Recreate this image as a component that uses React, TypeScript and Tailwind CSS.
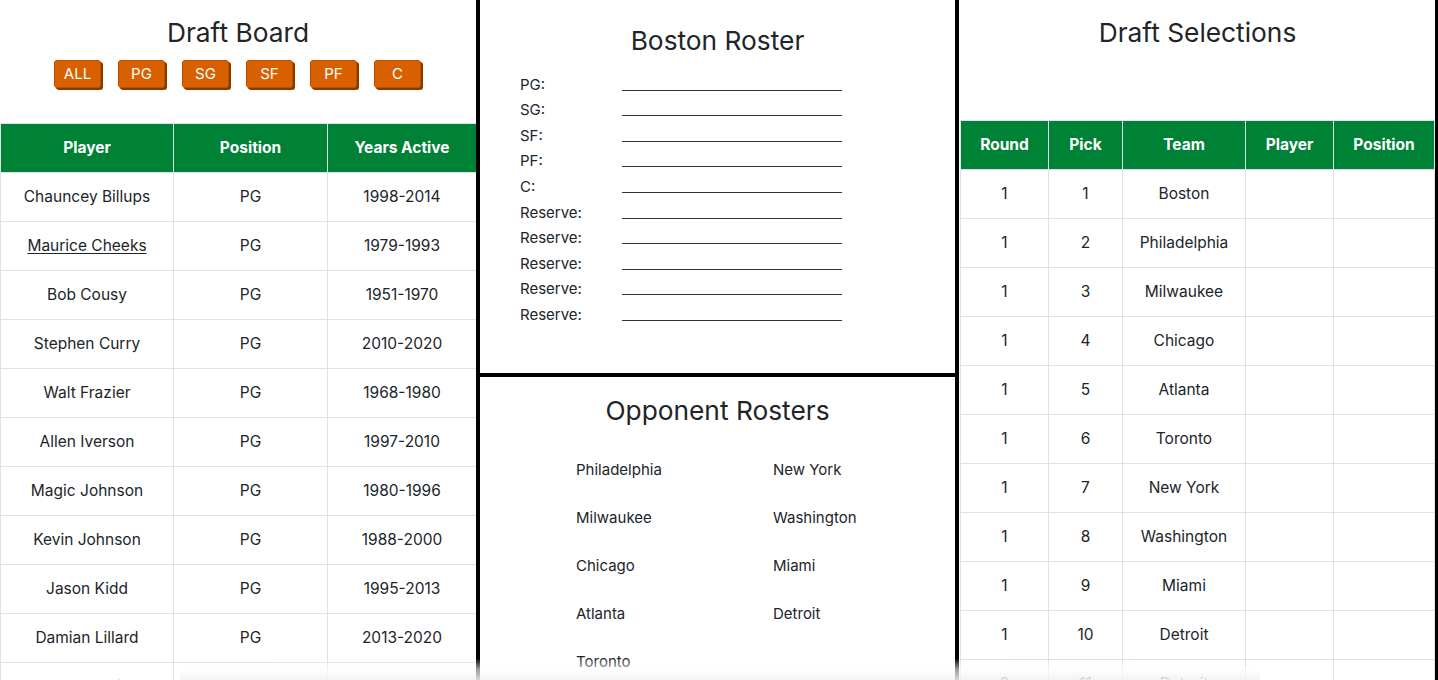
import React from 'react';

const players = [
  ['Chauncey Billups', 'PG', '1998-2014'],
  ['Maurice Cheeks', 'PG', '1979-1993'],
  ['Bob Cousy', 'PG', '1951-1970'],
  ['Stephen Curry', 'PG', '2010-2020'],
  ['Walt Frazier', 'PG', '1968-1980'],
  ['Allen Iverson', 'PG', '1997-2010'],
  ['Magic Johnson', 'PG', '1980-1996'],
  ['Kevin Johnson', 'PG', '1988-2000'],
  ['Jason Kidd', 'PG', '1995-2013'],
  ['Damian Lillard', 'PG', '2013-2020'],
  ['Pete Maravich', 'PG', '1970-1980'],
];

const order = ['Boston', 'Philadelphia', 'Milwaukee', 'Chicago', 'Atlanta', 'Toronto', 'New York', 'Washington', 'Miami', 'Detroit'];
const picks = [...order.map((t, i) => [1, i + 1, t]), [2, 11, 'Detroit']];

const rosterSlots = ['PG:', 'SG:', 'SF:', 'PF:', 'C:', 'Reserve:', 'Reserve:', 'Reserve:', 'Reserve:', 'Reserve:'];
const opponents = ['Philadelphia', 'New York', 'Milwaukee', 'Washington', 'Chicago', 'Miami', 'Atlanta', 'Detroit', 'Toronto'];
const filters = ['ALL', 'PG', 'SG', 'SF', 'PF', 'C'];

const th = 'h-[49px] border border-[#dee2e6] text-white font-bold text-[15.5px] text-center';
const td = 'h-[49px] border border-[#dee2e6] text-center text-[15.5px] font-normal';

const App: React.FC = () => {
  return (
    <div className="h-[680px] overflow-hidden bg-white text-[#212529] font-['Inter',sans-serif]">
      <div className="grid grid-cols-[476px_483px_479px] h-full">
        {/* draft board */}
        <div className="flex flex-col">
          <h3 className="pt-[17px] text-[26.3px] leading-[1.2] text-center font-normal">Draft Board</h3>
          <div className="flex justify-center gap-[17px] mt-[11px] pr-[1px]">
            {filters.map(f => (
              <button
                key={f}
                className="w-[47px] h-[28px] rounded-[3px] bg-[#d86000] text-white text-[15px] leading-none shadow-[2px_2px_0_#8a3a00] border border-[#b85200]"
              >
                {f}
              </button>
            ))}
          </div>
          <table className="mt-[35px] w-[476px] table-fixed border-collapse">
            <colgroup>
              <col className="w-[173px]" />
              <col className="w-[154px]" />
              <col className="w-[149px]" />
            </colgroup>
            <thead className="bg-[#008236]">
              <tr>
                <th className={th}>Player</th>
                <th className={th}>Position</th>
                <th className={th}>Years Active</th>
              </tr>
            </thead>
            <tbody>
              {players.map((p, i) => (
                <tr key={p[0]}>
                  <td className={td}>
                    <span className={i === 1 ? 'underline underline-offset-2' : ''}>{p[0]}</span>
                  </td>
                  <td className={td}>{p[1]}</td>
                  <td className={td}>{p[2]}</td>
                </tr>
              ))}
            </tbody>
          </table>
        </div>

        {/* middle rosters */}
        <div className="flex flex-col border-x-4 border-black">
          <div className="h-[377px] shrink-0 border-b-4 border-black pt-[25px]">
            <h3 className="text-[26.3px] leading-[1.2] text-center">Boston Roster</h3>
            <div className="mt-[15px] pl-[40px]">
              {rosterSlots.map((s, i) => (
                <div key={i} className="flex items-baseline text-[15px] leading-[25.6px]">
                  <span className="w-[102px]">{s}</span>
                  <span className="inline-block w-[220px] h-[16px] border-b border-[#333] translate-y-[1px]" />
                </div>
              ))}
            </div>
          </div>
          <div className="flex-1 pt-[18px]">
            <h3 className="text-[26.3px] leading-[1.2] text-center">Opponent Rosters</h3>
            <div className="mt-[20px] ml-[96px] grid grid-cols-[197px_197px]">
              {opponents.map(o => (
                <div key={o} className="h-[48px] flex items-center text-[15px]">{o}</div>
              ))}
            </div>
          </div>
        </div>

        {/* draft selections */}
        <div className="flex flex-col border-r-[3px] border-black pl-[1px]">
          <h3 className="pt-[17px] text-[26.3px] leading-[1.2] text-center">Draft Selections</h3>
          <table className="mt-[71px] w-[474px] table-fixed border-collapse">
            <colgroup>
              <col className="w-[88px]" />
              <col className="w-[74px]" />
              <col className="w-[123px]" />
              <col className="w-[88px]" />
              <col className="w-[101px]" />
            </colgroup>
            <thead className="bg-[#008236]">
              <tr>
                <th className={th}>Round</th>
                <th className={th}>Pick</th>
                <th className={th}>Team</th>
                <th className={th}>Player</th>
                <th className={th}>Position</th>
              </tr>
            </thead>
            <tbody>
              {picks.map(p => (
                <tr key={p[1]}>
                  <td className={td}>{p[0]}</td>
                  <td className={td}>{p[1]}</td>
                  <td className={td}>{p[2]}</td>
                  <td className={td}></td>
                  <td className={td}></td>
                </tr>
              ))}
            </tbody>
          </table>
        </div>
      </div>

      {/* faded bottom overlay */}
      <div className="fixed bottom-0 left-[180px] w-[1080px] h-[22px] rounded-t-[50%] bg-linear-to-b from-white/0 via-white/60 to-[#f2f2f2]/90 pointer-events-none" />
    </div>
  );
};

export default App;
